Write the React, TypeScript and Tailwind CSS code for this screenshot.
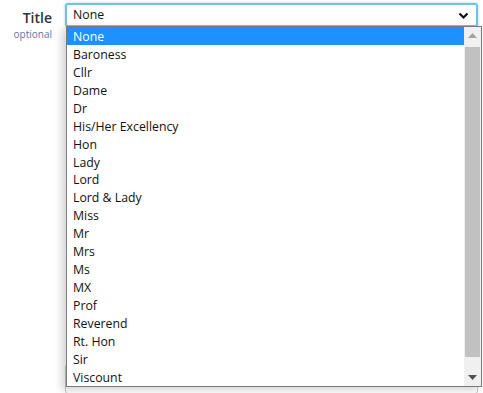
import React from "react";

const items = [
  "None","Baroness","Cllr","Dame","Dr","His/Her Excellency","Hon","Lady","Lord","Lord & Lady",
  "Miss","Mr","Mrs","Ms","MX","Prof","Reverend","Rt. Hon","Sir","Viscount",
];

export default function App() {
  return (
    <div className="relative w-[483px] h-[393px] overflow-hidden bg-white" style={{ fontFamily: '"Open Sans", "Noto Sans", sans-serif' }}>
      <div className="flex pt-[3px]">
        <div className="w-[52px] shrink-0 flex flex-col items-end pr-0">
          <div className="text-[14px] font-semibold text-[#333] leading-[24px] mt-[3px]">Title</div>
          <div className="text-[10px] text-[#5a78a0] leading-[12px] -mt-[2px]">optional</div>
        </div>
        <div className="ml-[13px] w-[413px] relative">
          <div className="h-[24px] rounded-[3px] border-2 border-[#6cc3e6] bg-white flex items-center pl-[6px] pr-[6px] pt-[1px] shadow-[0_0_3px_rgba(102,175,233,0.6)]">
            <span className="text-[12.3px] text-[#111] flex-1 leading-none">None</span>
            <svg width="11" height="8" viewBox="0 0 11 8" className="mr-[1px]">
              <path d="M1.5 1.5 L5.5 5.5 L9.5 1.5" stroke="#111" strokeWidth="2.2" fill="none" />
            </svg>
          </div>
          <div className="mt-[337px] h-[30px] border border-[#c8c8c8] rounded-[3px] bg-white" />
          <div className="absolute left-[1px] top-[23px] w-[416px] h-[361px] bg-white border border-[#7a7a7a] shadow-[-4px_3px_8px_rgba(0,0,0,0.18)] flex">
            <div className="flex-1 flex flex-col">
              {items.map((t, i) => (
                <div
                  key={t}
                  className={
                    "h-[18px] flex items-center pl-[6px] pt-[2px] text-[12.3px] leading-none " +
                    (i === 0 ? "bg-[#1e90ff] text-white" : "text-[#111]")
                  }
                >
                  {t}
                </div>
              ))}
            </div>
            <div className="w-[17px] bg-[#f0f0f0] flex flex-col items-center">
              <div className="h-[17px] w-full flex items-center justify-center">
                <svg width="9" height="5" viewBox="0 0 9 5"><path d="M0 5 L4.5 0 L9 5 Z" fill="#a3a3a3" /></svg>
              </div>
              <div className="w-[15px] h-[310px] bg-[#c1c1c1] mt-[3px]" />
              <div className="flex-1" />
              <div className="h-[17px] w-full flex items-center justify-center">
                <svg width="9" height="5" viewBox="0 0 9 5"><path d="M0 0 L9 0 L4.5 5 Z" fill="#505050" /></svg>
              </div>
            </div>
          </div>
        </div>
      </div>
    </div>
  );
}
